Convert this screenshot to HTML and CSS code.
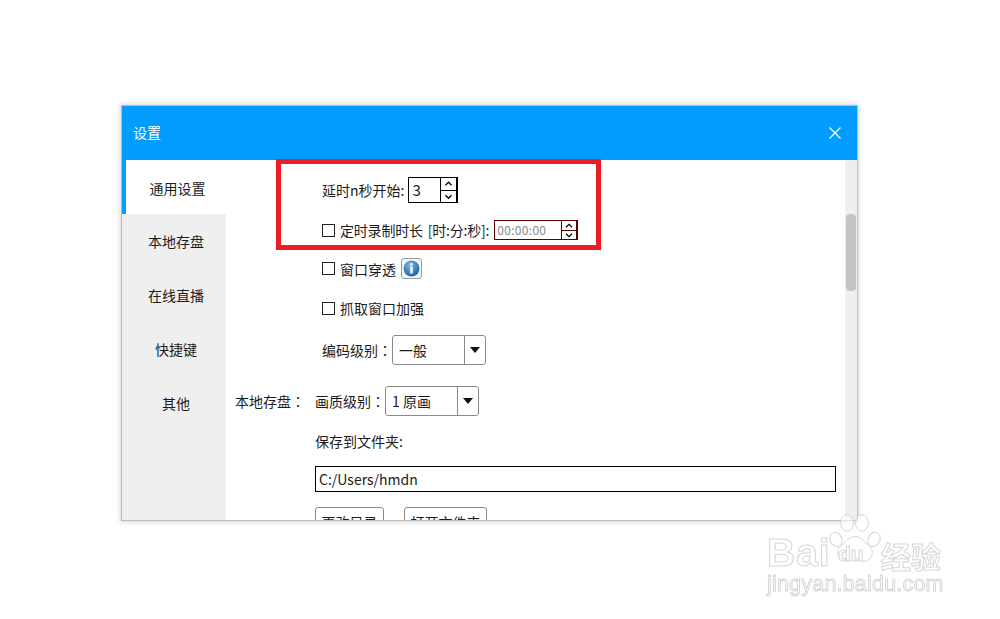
FILE: index.html
```html
<!DOCTYPE html>
<html lang="zh-CN">
<head>
<meta charset="utf-8">
<title>设置</title>
<link rel="stylesheet" href="styles.css">
</head>
<body>
<div class="window">
  <header class="titlebar">
    <span class="title">设置</span>
    <svg class="close" width="12" height="12" viewBox="0 0 12 12"><path d="M.5.5l11 11M11.5.5l-11 11" stroke="#fff" stroke-width="1.2" fill="none"/></svg>
  </header>
  <div class="body">
    <nav class="sidebar">
      <div class="tab active">通用设置</div>
      <div class="tab">本地存盘</div>
      <div class="tab">在线直播</div>
      <div class="tab">快捷键</div>
      <div class="tab">其他</div>
    </nav>
    <main class="main">
      <div class="row r1">
        <span>延时n秒开始:</span>
        <div class="spin">
          <span class="spin-val">3</span>
          <div class="spin-btns">
            <svg width="15" height="11" viewBox="0 0 15 11"><path d="M4.5 7l3-3 3 3" stroke="#000" stroke-width="1.3" fill="none"/></svg>
            <svg width="15" height="11" viewBox="0 0 15 11"><path d="M4.5 4l3 3 3-3" stroke="#000" stroke-width="1.3" fill="none"/></svg>
          </div>
        </div>
      </div>
      <div class="row r2">
        <span class="check"></span><span class="lbl-long">定时录制时长 [时:分:秒]:</span>
        <div class="spin time">
          <span class="spin-val">00:00:00</span>
          <div class="spin-btns">
            <svg width="14" height="8" viewBox="0 0 14 8"><path d="M4 6l3-3 3 3" stroke="#000" stroke-width="1.2" fill="none"/></svg>
            <svg width="14" height="8" viewBox="0 0 14 8"><path d="M4 2.500l3 3 3-3" stroke="#000" stroke-width="1.2" fill="none"/></svg>
          </div>
        </div>
      </div>
      <div class="row r3">
        <span class="check"></span><span>窗口穿透</span>
        <span class="info">
          <svg width="17" height="17" viewBox="0 0 17 17">
            <defs><radialGradient id="ball" cx=".4" cy=".3" r=".8"><stop offset="0" stop-color="#7db8e0"/><stop offset="1" stop-color="#0f5a9c"/></radialGradient></defs>
            <circle cx="8.500" cy="8.500" r="8" fill="url(#ball)"/>
            <rect x="7.300" y="3.200" width="2.400" height="2.200" fill="#fff"/>
            <rect x="7.300" y="6.500" width="2.400" height="7" fill="#fff"/>
          </svg>
        </span>
      </div>
      <div class="row r4"><span class="check"></span><span>抓取窗口加强</span></div>
      <div class="row r5">
        <span class="sel-label">编码级别<span class="colon" lang="zh-TW">：</span></span>
        <div class="select s1"><span class="sel-val">一般</span><span class="sel-btn"><i class="tri"></i></span></div>
      </div>
      <div class="row r6">
        <span class="group">本地存盘<span class="colon" lang="zh-TW">：</span></span>
        <span class="sel-label">画质级别<span class="colon" lang="zh-TW">：</span></span>
        <div class="select s2"><span class="sel-val">1 原画</span><span class="sel-btn"><i class="tri"></i></span></div>
      </div>
      <div class="row r7">保存到文件夹:</div>
      <div class="row r8"><div class="path">C:/Users/hmdn</div></div>
      <div class="row r9"><span class="btn b1">更改目录</span><span class="btn b2">打开文件夹</span></div>
    </main>
    <aside class="scrollbar"><div class="thumb"></div></aside>
  </div>
</div>
<div class="redbox"></div>
<div class="mark">
  <svg class="paw" width="54" height="51" viewBox="0 0 54 56" preserveAspectRatio="none" fill="#fff" fill-opacity=".55" stroke="#d4d4d4" stroke-width="1">
    <ellipse cx="8" cy="29" rx="6" ry="8" transform="rotate(-20 8 29)"/>
    <ellipse cx="19" cy="11" rx="6.500" ry="9"/>
    <ellipse cx="34" cy="11" rx="6.500" ry="9"/>
    <ellipse cx="46" cy="29" rx="6" ry="8" transform="rotate(20 46 29)"/>
    <path d="M27 26c-7 0-9 6-14 10-5 4-5 16 5 17 4 0 6-2 9-2s5 2 9 2c10-1 10-13 5-17-5-4-7-10-14-10z"/>
  </svg>
  <span class="m-bai">Bai</span>
  <span class="m-du">du</span>
  <span class="m-cn">经验</span>
  <span class="m-url">jingyan.baidu.com</span>
</div>
</body>
</html>
```
FILE: styles.css
```css
* { box-sizing: border-box; }
html, body { margin: 0; height: 619px; overflow: hidden; background: #fff; }
body { font-family: "Noto Sans CJK SC", "Noto Sans", sans-serif; font-size: 14px; color: #1c1c1c; position: relative; }

.window {
  margin: 106px 0 0 122px;
  width: 735px;
  height: 414px;
  display: flex;
  flex-direction: column;
  background: #fff;
  box-shadow: 0 0 0 1px #bdbdbd, 0 0 5px 2px #d8d8d8;
  overflow: hidden;
}
.titlebar {
  height: 54px;
  flex: none;
  background: #009cff;
  display: flex;
  align-items: center;
  justify-content: space-between;
  padding: 0 16px 0 11px;
  color: #fff;
}
.title { margin-bottom: 2px; }
.body { flex: 1; display: flex; min-height: 0; }

.sidebar { width: 104px; flex: none; background: #efefef; }
.tab { height: 54px; display: flex; align-items: center; justify-content: center; padding-left: 4px; }
.tab.active { background: #fff; border-left: 4px solid #009cff; padding: 2px 0 0 3px; }

.main { flex: 1; min-width: 0; overflow: hidden; display: flex; flex-direction: column; }
.scrollbar { width: 12px; flex: none; background: #efefef; padding: 54px 1px 0; }
.thumb { height: 77px; background: #c4c4c4; border-radius: 4px; }

.row { display: flex; align-items: center; flex: none; padding-left: 96px; height: 20px; }
.r1 { margin-top: 17px; height: 26px; }
.r2 { margin-top: 17px; }
.r3 { margin-top: 18px; height: 21px; }
.r4 { margin-top: 19px; }
.r5 { margin-top: 17px; height: 30px; }
.r6 { margin-top: 21px; height: 30px; padding-left: 9px; }
.r7 { margin-top: 15px; padding-left: 89px; }
.r8 { margin-top: 15px; height: 26px; padding-left: 89px; }
.r9 { margin-top: 15px; height: 26px; padding-left: 89px; align-items: flex-start; }

.check { width: 13px; height: 13px; border: 1px solid #222; margin-right: 5px; flex: none; background: #fff; }
.lbl-long { margin-right: 5px; letter-spacing: -.2px; word-spacing: 2px; }

.spin { display: flex; width: 50px; height: 26px; margin-left: 4px; border: 1px solid #000; background: #fff; }
.spin-val { flex: 1; padding-left: 3px; font-size: 15px; line-height: 24px; }
.spin-btns { width: 17px; flex: none; display: flex; flex-direction: column; justify-content: space-between; border-left: 1px solid #000; border-right: 1px solid #000; background: #000; gap: 1px; }
.spin-btns svg { flex: 1; background: #fff; display: block; }
.time { width: 84px; height: 20px; margin-left: 0; border-color: #5a0000; }
.time .spin-val { font-size: 12px; line-height: 18px; color: #8a8a8a; padding-left: 2px; letter-spacing: .3px; }
.time .spin-btns { width: 16px; background: #5a0000; border-color: #5a0000; }

.info { width: 21px; height: 21px; margin-left: 5px; border: 1px solid #999; border-radius: 3px; display: flex; align-items: center; justify-content: center; background: #f7f7f7; }

.sel-label { flex: none; }
.colon { font-family: "Noto Sans CJK TC", sans-serif; }
.group { width: 80px; flex: none; }
.select { display: flex; height: 30px; border: 1px solid #8a8a8a; border-radius: 3px; background: #fff; }
.s1 { width: 94px; }
.s2 { width: 94px; }
.sel-val { flex: 1; padding-left: 6px; line-height: 28px; font-size: 14px; }
.sel-btn { width: 21px; flex: none; border-left: 1px solid #8a8a8a; display: flex; align-items: center; justify-content: center; }
.tri { width: 0; height: 0; border: 5px solid transparent; border-top: 6px solid #111; border-bottom: 0; }

.path { width: 521px; height: 26px; border: 1px solid #000; padding-left: 3px; line-height: 24px; font-size: 14px; }
.btn { height: 30px; border: 1px solid #8a8a8a; border-radius: 3px; display: flex; align-items: center; justify-content: center; background: #fff; }
.b1 { width: 69px; margin-right: 20px; }
.b2 { width: 83px; }

.redbox { position: absolute; left: 276px; top: 159px; width: 325px; height: 91px; border: 5px solid #ee1c25; }

.mark { position: absolute; left: 760px; top: 505px; width: 200px; height: 100px; color: #fff; font-family: "Liberation Sans", sans-serif; -webkit-text-stroke: 1px #d6d6d6; filter: blur(.4px); }
.mark span { position: absolute; white-space: nowrap; }
.paw { position: absolute; left: 68px; top: 8px; }
.m-bai { left: 7px; top: 26px; font-size: 39px; font-weight: 700; letter-spacing: 1px; line-height: 44px; }
.m-du { left: 78px; top: 37px; font-size: 21px; font-weight: 700; line-height: 24px; }
.m-cn { left: 121px; top: 35px; font-size: 30px; line-height: 30px; font-family: "Noto Sans CJK SC", sans-serif; font-weight: 700; }
.m-url { left: 7px; top: 67px; font-size: 21.500px; line-height: 25px; letter-spacing: .2px; }
```
